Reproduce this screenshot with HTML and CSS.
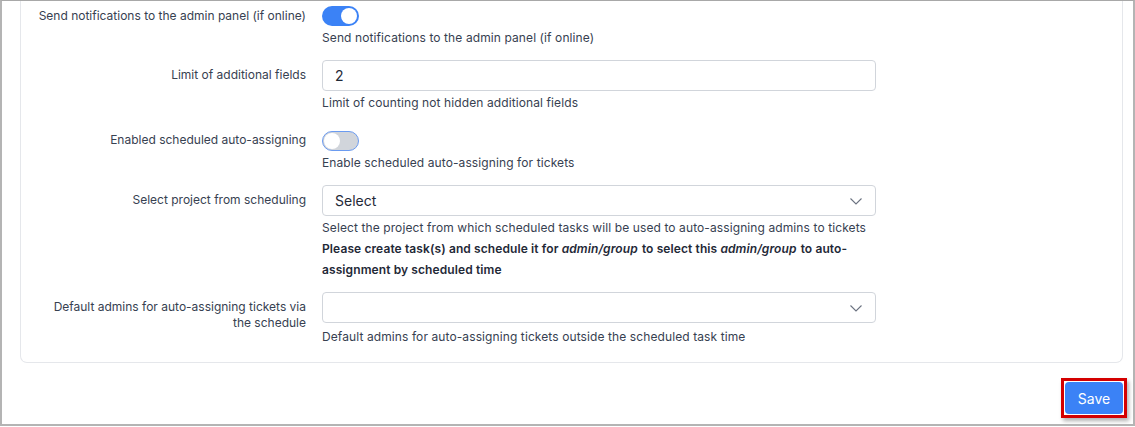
FILE: index.html
```html
<!DOCTYPE html>
<html>
<head>
<meta charset="utf-8">
<link rel="stylesheet" href="styles.css">
</head>
<body>
<div class="frame">
  <div class="card">
    <div class="row">
      <div class="label">Send notifications to the admin panel (if online)</div>
      <div class="control">
        <span class="toggle on"><span class="knob"></span></span>
        <div class="help">Send notifications to the admin panel (if online)</div>
      </div>
    </div>
    <div class="row">
      <div class="label">Limit of additional fields</div>
      <div class="control">
        <div class="input">2</div>
        <div class="help">Limit of counting not hidden additional fields</div>
      </div>
    </div>
    <div class="row">
      <div class="label">Enabled scheduled auto-assigning</div>
      <div class="control">
        <span class="toggle off"><span class="knob"></span></span>
        <div class="help">Enable scheduled auto-assigning for tickets</div>
      </div>
    </div>
    <div class="row">
      <div class="label">Select project from scheduling</div>
      <div class="control">
        <div class="input select">Select
          <svg class="chev" width="12" height="7" viewBox="0 0 12 7"><path d="M0.5 0.5 L6 6 L11.5 0.5" fill="none" stroke="#6b7280" stroke-width="1.1"/></svg>
        </div>
        <div class="help">Select the project from which scheduled tasks will be used to auto-assigning admins to tickets</div>
        <div class="note">Please create task(s) and schedule it for <i>admin/group</i> to select this <i>admin/group</i> to auto-assignment by scheduled time</div>
      </div>
    </div>
    <div class="row">
      <div class="label">Default admins for auto-assigning tickets via the schedule</div>
      <div class="control">
        <div class="input select">
          <svg class="chev" width="12" height="7" viewBox="0 0 12 7"><path d="M0.5 0.5 L6 6 L11.5 0.5" fill="none" stroke="#6b7280" stroke-width="1.1"/></svg>
        </div>
        <div class="help help-last">Default admins for auto-assigning tickets outside the scheduled task time</div>
      </div>
    </div>
  </div>
  <div class="footer">
    <span class="highlight"><button class="save">Save</button></span>
  </div>
</div>
</body>
</html>
```

FILE: styles.css
```css
* { box-sizing: border-box; }
html, body { margin: 0; padding: 0; background: #fff; }
body { font-family: Inter, "Noto Sans", sans-serif; color: #374151; }
.frame {
  width: 1135px;
  height: 426px;
  border-top: 1px solid #a8a8a8;
  border-left: 2px solid #b4b4b4;
  border-right: 2px solid #b4b4b4;
  border-bottom: 2px solid #b4b4b4;
  overflow: hidden;
}
.card {
  margin: 0 10px 0 18px;
  border: 1px solid #e5e7eb;
  border-top: none;
  border-radius: 0 0 7px 7px;
  padding: 0 0 15px 0;
}
.row {
  display: grid;
  grid-template-columns: 285px 554px;
  column-gap: 16px;
  margin-bottom: 12px;
}
.row:last-child { margin-bottom: 0; }
.label {
  text-align: right;
  font-size: 12px;
  line-height: 16px;
  padding: 7px 0 0 15px;
  color: #374151;
}
.control { display: flex; flex-direction: column; align-items: flex-start; }
.toggle {
  display: block;
  width: 37px;
  height: 20px;
  border-radius: 10px;
  margin-top: 5px;
  position: relative;
}
.toggle .knob {
  position: absolute;
  top: 2px;
  width: 16px;
  height: 16px;
  border-radius: 50%;
  background: #fff;
}
.toggle.on { background: #3b82f6; }
.toggle.on .knob { left: 19px; }
.toggle.off { background: #d1d5db; border: 1px solid #6b9bf0; margin-top: 6px; }
.toggle.off .knob { left: 1px; top: 1px; }
.input {
  width: 554px;
  height: 31px;
  border: 1px solid #d1d5db;
  border-radius: 4px;
  padding: 0 12px;
  font-size: 14px;
  line-height: 29px;
  color: #1f2937;
  position: relative;
}
.select .chev { position: absolute; right: 13px; top: 12px; }
.help {
  font-size: 12px;
  line-height: 21px;
  margin-top: 1px;
  letter-spacing: 0.1px;
  color: #374151;
}
.help-last { margin-top: 3px; }
.note {
  font-size: 12px;
  line-height: 21px;
  font-weight: 600;
  letter-spacing: 0.1px;
  color: #1f2937;
  width: 554px;
}
.note i { padding-right: 1px; }
.footer {
  display: flex;
  justify-content: flex-end;
  padding: 15px 6px 0 0;
}
.highlight {
  display: inline-block;
  border: 3px solid #d40000;
  padding: 1px;
  box-shadow: 2px 3px 4px rgba(0,0,0,0.3);
}
.save {
  display: block;
  width: 58px;
  height: 32px;
  border: none;
  border-radius: 4px;
  background: #3b82f6;
  color: #fff;
  font-family: Inter, "Noto Sans", sans-serif;
  font-size: 14px;
  padding: 0;
}
```
